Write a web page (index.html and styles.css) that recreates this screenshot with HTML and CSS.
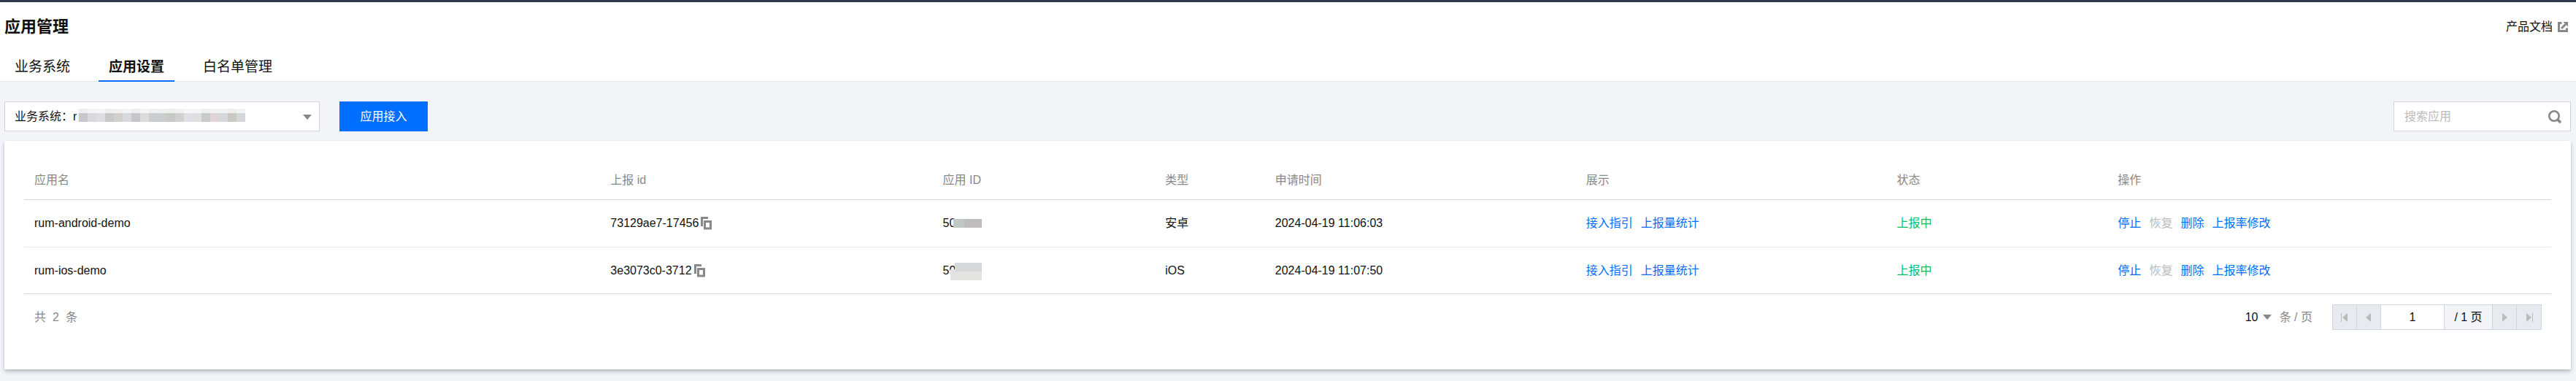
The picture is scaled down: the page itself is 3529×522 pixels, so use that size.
FILE: index.html
```html
<!DOCTYPE html>
<html lang="zh-CN">
<head>
    <meta charset="UTF-8">
    <meta name="viewport" content="width=device-width, initial-scale=1.0">
    <title>应用管理</title>
    <link rel="stylesheet" href="styles.css">
</head>
<body>
    <header class="page-header">
        <div class="title-row">
            <h1>应用管理</h1>
            <a class="doc-link" href="#">
                产品文档
                <svg width="14" height="14" viewBox="0 0 14 14" aria-hidden="true">
                    <path d="M5.5 1.5h-4v11h11V8.5M5 9l6-6" fill="none" stroke="#888" stroke-width="3"/>
                    <path d="M7.5 0H14v6.5z" fill="#888"/>
                </svg>
            </a>
        </div>
        <nav class="tabs">
            <a href="#">业务系统</a>
            <a href="#" class="active" aria-current="page">应用设置</a>
            <a href="#">白名单管理</a>
        </nav>
    </header>

    <main>
        <div class="toolbar">
            <div class="system-picker">
                <select aria-label="业务系统">
                    <option>业务系统：r</option>
                </select>
                <span class="mask mask-system"></span>
                <span class="caret"></span>
            </div>
            <button type="button" class="btn-primary">应用接入</button>
            <div class="search-box">
                <input type="text" placeholder="搜索应用" aria-label="搜索应用">
                <button type="button" aria-label="搜索">
                    <svg width="18" height="18" viewBox="0 0 18 18" aria-hidden="true">
                        <circle cx="8" cy="8" r="6.7" fill="none" stroke="#888" stroke-width="2.6"/>
                        <path d="M12.5 12.5l4.5 4.5" stroke="#888" stroke-width="3.6"/>
                    </svg>
                </button>
            </div>
        </div>

        <section class="card">
            <table class="app-table">
                <colgroup>
                    <col class="col-name">
                    <col class="col-report">
                    <col class="col-id">
                    <col class="col-type">
                    <col class="col-time">
                    <col class="col-show">
                    <col class="col-status">
                    <col class="col-action">
                </colgroup>
                <thead>
                    <tr>
                        <th>应用名</th>
                        <th>上报 id</th>
                        <th>应用 ID</th>
                        <th>类型</th>
                        <th>申请时间</th>
                        <th>展示</th>
                        <th>状态</th>
                        <th>操作</th>
                    </tr>
                </thead>
                <tbody>
                    <tr>
                        <td>rum-android-demo</td>
                        <td>
                            <div class="report-id">
                                73129ae7-17456
                                <button type="button" class="copy" aria-label="复制">
                                    <svg width="15" height="18" viewBox="0 0 15 18" aria-hidden="true">
                                        <path d="M1.5 13V1.5H10M5.5 6.5h8v9.5h-8z" fill="none" stroke="#888" stroke-width="3"/>
                                    </svg>
                                </button>
                            </div>
                        </td>
                        <td><span class="masked-id">50<span class="mask mask-a"></span></span></td>
                        <td>安卓</td>
                        <td>2024-04-19 11:06:03</td>
                        <td>
                            <div class="links">
                                <a href="#">接入指引</a>
                                <a href="#">上报量统计</a>
                            </div>
                        </td>
                        <td class="status">上报中</td>
                        <td>
                            <div class="links">
                                <button type="button">停止</button>
                                <button type="button" disabled>恢复</button>
                                <button type="button">删除</button>
                                <button type="button">上报率修改</button>
                            </div>
                        </td>
                    </tr>
                    <tr>
                        <td>rum-ios-demo</td>
                        <td>
                            <div class="report-id">
                                3e3073c0-3712
                                <button type="button" class="copy" aria-label="复制">
                                    <svg width="15" height="18" viewBox="0 0 15 18" aria-hidden="true">
                                        <path d="M1.5 13V1.5H10M5.5 6.5h8v9.5h-8z" fill="none" stroke="#888" stroke-width="3"/>
                                    </svg>
                                </button>
                            </div>
                        </td>
                        <td><span class="masked-id">59<span class="mask mask-b"></span></span></td>
                        <td>iOS</td>
                        <td>2024-04-19 11:07:50</td>
                        <td>
                            <div class="links">
                                <a href="#">接入指引</a>
                                <a href="#">上报量统计</a>
                            </div>
                        </td>
                        <td class="status">上报中</td>
                        <td>
                            <div class="links">
                                <button type="button">停止</button>
                                <button type="button" disabled>恢复</button>
                                <button type="button">删除</button>
                                <button type="button">上报率修改</button>
                            </div>
                        </td>
                    </tr>
                </tbody>
            </table>

            <footer class="table-footer">
                <div class="total"><span>共</span><span>2</span><span>条</span></div>
                <div class="page-size">
                    <select aria-label="每页条数">
                        <option>10</option>
                    </select>
                    <span class="caret"></span>
                    <span>条 / 页</span>
                </div>
                <div class="pager">
                    <button type="button" disabled aria-label="首页">
                        <svg width="10" height="12" viewBox="0 0 10 12" aria-hidden="true"><path d="M0 0h1v12H0zM9 0v12L2 6z" fill="#bbb"/></svg>
                    </button>
                    <button type="button" disabled aria-label="上一页">
                        <svg width="10" height="12" viewBox="0 0 10 12" aria-hidden="true"><path d="M8 0v12L1 6z" fill="#bbb"/></svg>
                    </button>
                    <input type="text" value="1" aria-label="页码">
                    <span class="pages">/ 1 页</span>
                    <button type="button" disabled aria-label="下一页">
                        <svg width="10" height="12" viewBox="0 0 10 12" aria-hidden="true"><path d="M2 0v12l7-6z" fill="#bbb"/></svg>
                    </button>
                    <button type="button" disabled aria-label="末页">
                        <svg width="10" height="12" viewBox="0 0 10 12" aria-hidden="true"><path d="M9 0h1v12H9zM1 0v12l7-6z" fill="#bbb"/></svg>
                    </button>
                </div>
            </footer>
        </section>
    </main>
</body>
</html>
```
FILE: styles.css
```css
* {
    box-sizing: border-box;
}
body {
    margin: 0;
    min-height: 100vh;
    background-color: #f3f4f8;
    color: #111;
    font-family: "Liberation Sans", "Noto Sans CJK SC", sans-serif;
    font-size: 16px;
    line-height: 24px;
}
button, input, select {
    font: inherit;
    color: inherit;
    margin: 0;
    padding: 0;
    border: none;
    border-radius: 0;
    background: none;
}
a {
    color: inherit;
    text-decoration: none;
}
svg {
    display: block;
}
.page-header {
    background-color: #fff;
    border-top: 3px solid #2f3a4f;
    border-bottom: 1px solid #e5e7ea;
}
.title-row {
    display: flex;
    align-items: center;
    justify-content: space-between;
    height: 68px;
    padding: 0 11px 0 6px;
}
h1 {
    margin: 0;
    font-size: 22px;
    font-weight: bold;
}
.doc-link {
    display: flex;
    align-items: center;
    gap: 7px;
}
.tabs {
    display: flex;
    gap: 25px;
    padding-left: 6px;
    font-size: 19px;
}
.tabs a {
    height: 41px;
    margin-bottom: -1px;
    padding: 9px 14px 0;
    border-bottom: 2px solid transparent;
}
.tabs a.active {
    font-weight: bold;
    border-bottom-color: #006eff;
}
.toolbar {
    display: flex;
    height: 41px;
    margin: 27px 7px 13px 6px;
}
.system-picker {
    position: relative;
    width: 432px;
}
.system-picker select {
    appearance: none;
    width: 100%;
    height: 100%;
    padding: 0 13px;
    border: 1px solid #cfd5de;
    background-color: #fff;
}
.caret {
    border: 6px solid transparent;
    border-top: 7px solid #888;
    border-bottom: none;
    pointer-events: none;
}
.system-picker .caret {
    position: absolute;
    right: 11px;
    top: 18px;
}
/* pixelated blocks over private values */
.mask {
    position: absolute;
}
.mask-system {
    left: 99px;
    top: 10px;
    width: 231px;
    height: 18px;
    background:
        linear-gradient(rgba(255, 255, 255, 0.7) 6px, transparent 6px),
        linear-gradient(90deg, #f3f3f3 3px, #c9c7ca 3px 15px, #dad8de 15px 27px, #dedee0 27px 39px, #c8c8c9 39px 51px, #d1d0cb 51px 63px, #d7d9e0 63px 75px, #c7c7cb 75px 87px, #dadcd8 87px 99px, #cbccd0 99px 111px, #c9cdce 111px 123px, #c6cbc6 123px 135px, #d0d2d0 135px 147px, #dfe0e6 147px 159px, #dfdfe0 159px 171px, #c8cbca 171px 183px, #dfd5d4 183px 195px, #d4d7db 195px 207px, #cac9c5 207px 219px, #d3d7da 219px);
}
.btn-primary {
    width: 121px;
    margin-left: 27px;
    background-color: #006eff;
    color: #fff;
}
.search-box {
    display: flex;
    align-items: center;
    width: 243px;
    margin-left: auto;
    padding: 0 12px 0 14px;
    border: 1px solid #cfd5de;
    background-color: #fff;
}
.search-box input {
    flex: 1;
    min-width: 0;
    outline: none;
}
.search-box input::placeholder {
    color: #bbb;
}
.card {
    margin: 0 7px 16px 6px;
    padding: 27px 27px 54px;
    background-color: #fff;
    box-shadow: 0 3px 5px rgba(54, 58, 80, 0.32);
}
.app-table {
    width: 100%;
    table-layout: fixed;
    border-collapse: separate;
    border-spacing: 0;
}
.app-table th, .app-table td {
    padding: 0 14px;
    text-align: left;
}
.app-table th {
    height: 54px;
    color: #888;
    font-weight: normal;
    border-bottom: 1px solid #cfd5de;
}
.app-table td {
    height: 65px;
    border-bottom: 1px solid #e5e8ed;
}
.app-table tr:last-child td {
    height: 64px;
}
.app-table tbody tr:last-child td {
    border-bottom-color: #cfd5de;
}
.col-name { width: 22.8%; }
.col-report { width: 13.15%; }
.col-id { width: 8.8%; }
.col-type { width: 4.35%; }
.col-time { width: 12.3%; }
.col-show { width: 12.3%; }
.col-status { width: 8.75%; }
.report-id {
    display: flex;
    align-items: center;
    gap: 3px;
}
.masked-id {
    position: relative;
}
.mask-a {
    left: 14px;
    top: 3px;
    width: 39px;
    height: 12px;
    background: linear-gradient(90deg, #c0c8c6 15px, #bebcbd 15px);
}
.mask-b {
    left: 10px;
    top: -2px;
    width: 43px;
    height: 24px;
    background:
        linear-gradient(#d7d8d9, #d7d8d9) right top / 37px 12px no-repeat,
        linear-gradient(#e3e3e2, #e3e3e2) left bottom / 43px 15px no-repeat;
}
.links {
    display: flex;
    gap: 11px;
    color: #006eff;
}
.links button:disabled {
    color: #bbb;
}
.status {
    color: #0abf5b;
}
.table-footer {
    display: flex;
    align-items: center;
    padding: 14px 13px 0 14px;
    color: #888;
}
.total {
    display: flex;
    gap: 9px;
    margin-right: auto;
}
.page-size {
    display: flex;
    align-items: center;
    margin-right: 27px;
}
.page-size select {
    appearance: none;
    width: 24px;
    color: #111;
}
.page-size .caret {
    margin-right: 11px;
}
.pager {
    display: flex;
    height: 35px;
    border: 1px solid #cfd5de;
    color: #111;
}
.pager > * {
    display: flex;
    align-items: center;
    justify-content: center;
    width: 33px;
    border-right: 1px solid #cfd5de;
}
.pager > :last-child {
    border-right: none;
}
.pager button {
    background-color: #e7eaef;
}
.pager input {
    width: 87px;
    text-align: center;
}
.pager .pages {
    width: 66px;
    background-color: #f3f4f8;
}
```
